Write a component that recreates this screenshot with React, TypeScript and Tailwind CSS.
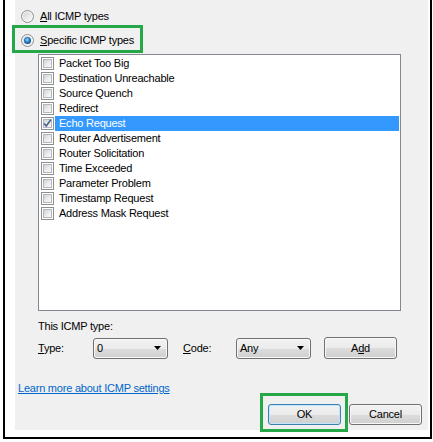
import React from "react";

const items = [
  "Packet Too Big",
  "Destination Unreachable",
  "Source Quench",
  "Redirect",
  "Echo Request",
  "Router Advertisement",
  "Router Solicitation",
  "Time Exceeded",
  "Parameter Problem",
  "Timestamp Request",
  "Address Mask Request",
];

const btnBg =
  "bg-[linear-gradient(to_bottom,#f2f2f2_0%,#ebebeb_50%,#dddddd_50%,#cfcfcf_100%)]";

function Radio({ checked }: { checked?: boolean }) {
  return (
    <svg width="13" height="13" viewBox="0 0 13 13" className="shrink-0">
      <defs>
        <linearGradient id={checked ? "rg1" : "rg0"} x1="0" y1="0" x2="1" y2="1">
          <stop offset="0" stopColor="#d4d4d4" />
          <stop offset="1" stopColor="#fbfbfb" />
        </linearGradient>
        <radialGradient id="dot" cx="0.45" cy="0.4" r="0.6">
          <stop offset="0" stopColor="#9ddcfb" />
          <stop offset="0.5" stopColor="#2a8ad4" />
          <stop offset="1" stopColor="#18467e" />
        </radialGradient>
      </defs>
      <circle cx="6.5" cy="6.5" r="6" fill="#f4f4f4" stroke="#8e8f8f" />
      <circle cx="6.5" cy="6.5" r="4.5" fill={`url(#${checked ? "rg1" : "rg0"})`} />
      {checked && <circle cx="6.5" cy="6.5" r="3.5" fill="url(#dot)" />}
    </svg>
  );
}

function Checkbox({ checked }: { checked?: boolean }) {
  return (
    <div className="relative h-[13px] w-[13px] shrink-0 border border-[#8e8f8f] bg-white p-[1px]">
      <div className="h-full w-full border border-[#b4b8bd] bg-[linear-gradient(135deg,#cfd2d6_0%,#eeeeee_60%,#f8f8f8_100%)]" />
      {checked && (
        <svg width="11" height="11" viewBox="0 0 11 11" className="absolute left-0 top-0">
          <path d="M2 5.5 L4.3 8 L8.8 1.8" fill="none" stroke="#4a5f8c" strokeWidth="1.6" />
        </svg>
      )}
    </div>
  );
}

function Combo({ value }: { value: string }) {
  return (
    <div
      className={`flex h-[21px] w-[75px] items-center justify-between rounded-[3px] border border-[#707070] ${btnBg} pl-[3px] pr-[6px] shadow-[inset_0_0_0_1px_#f8f8f8]`}
    >
      <span>{value}</span>
      <svg width="7" height="4" viewBox="0 0 7 4">
        <path d="M0 0 H7 L3.5 4 Z" fill="#000" />
      </svg>
    </div>
  );
}

function Button({ children, isDefault }: { children: React.ReactNode; isDefault?: boolean }) {
  return (
    <div
      className={`flex h-[21px] w-[73px] items-center justify-center rounded-[3px] border ${
        isDefault
          ? "border-[#3c7fb1] shadow-[inset_0_0_0_1px_#bfe6fb]"
          : "border-[#707070] shadow-[inset_0_0_0_1px_#f8f8f8]"
      } ${btnBg}`}
    >
      {children}
    </div>
  );
}

export default function App() {
  return (
    <div
      className="relative h-[442px] w-[433px] bg-white pb-[3px] pl-[3px] pr-[1px] text-[11px] leading-[13px] tracking-[-0.22px] text-black"
      style={{ fontFamily: '"Liberation Sans", Arial, sans-serif' }}
    >
      <div className="border-b-2 border-l-2 border-r-2 border-black bg-white pb-[7px] pl-[10px] pr-[2px]">
        <div className="flex h-[430px] flex-col bg-[#f0f0f0]">
          <div className="mt-[10px] flex h-[13px] items-center gap-[6px] pl-[6px]">
            <Radio />
            <span>
              <u>A</u>ll ICMP types
            </span>
          </div>
          <div className="mt-[11px] flex h-[13px] items-center gap-[6px] pl-[6px]">
            <Radio checked />
            <span>
              <u>S</u>pecific ICMP types
            </span>
          </div>

          <div className="ml-[23px] mt-[7px] h-[257px] w-[363px] border border-[#828790] bg-white pt-[1px]">
            {items.map((it) => {
              const sel = it === "Echo Request";
              return (
                <div key={it} className="flex h-[15px] items-center">
                  <div className="ml-[2px]">
                    <Checkbox checked={sel} />
                  </div>
                  <div
                    className={`ml-[1px] mr-[1px] flex h-[15px] flex-1 items-center pl-[4px] ${
                      sel ? "bg-[#3399ff] text-white" : ""
                    }`}
                  >
                    {it}
                  </div>
                </div>
              );
            })}
          </div>

          <div className="ml-[23px] mt-[9px]">This ICMP type:</div>

          <div className="ml-[23px] mt-[4px] flex h-[22px] items-center">
            <span className="w-[55px]">
              <u>T</u>ype:
            </span>
            <Combo value="0" />
            <span className="ml-[15px] w-[53px]">
              <u>C</u>ode:
            </span>
            <Combo value="Any" />
            <div
              className={`ml-[13px] flex h-[22px] w-[73px] items-center justify-center rounded-[3px] border border-[#707070] ${btnBg} shadow-[inset_0_0_0_1px_#f8f8f8]`}
            >
              <span>
                A<u>d</u>d
              </span>
            </div>
          </div>

          <a className="ml-[3px] mt-[23px] self-start text-[#0066cc] underline">
            Learn more about ICMP settings
          </a>

          <div className="mt-[9px] flex justify-end gap-[8px] pr-[6px]">
            <Button isDefault>OK</Button>
            <Button>Cancel</Button>
          </div>
        </div>
      </div>

      <div className="absolute left-[12px] top-[25px] h-[28px] w-[131px] border-[3px] border-[#25a848]" />
      <div className="absolute left-[260px] top-[393px] h-[39px] w-[88px] border-[3px] border-[#25a848]" />
    </div>
  );
}
